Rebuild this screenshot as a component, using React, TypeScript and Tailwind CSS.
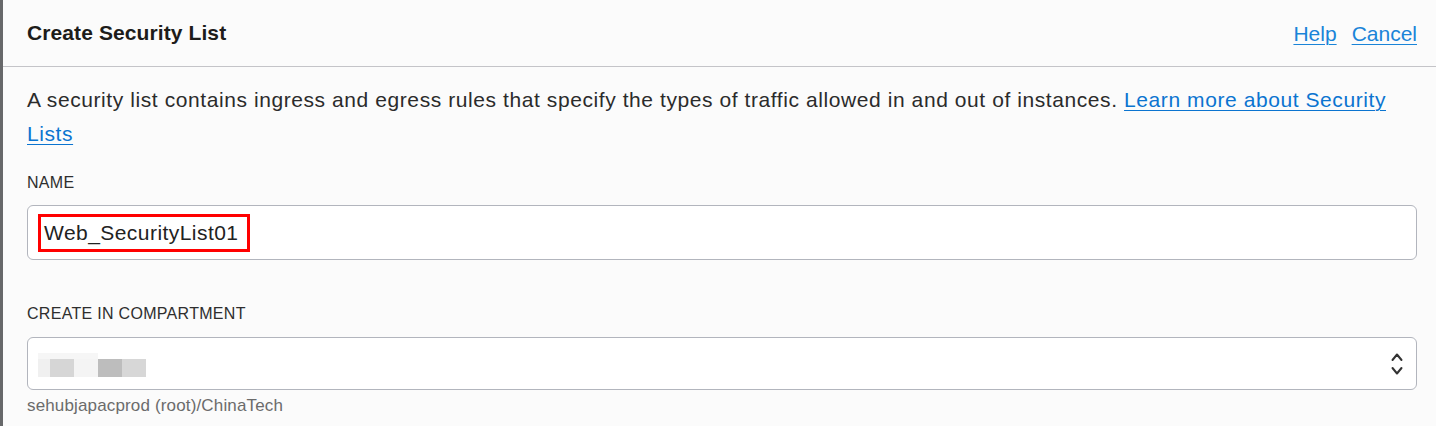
const font = { fontFamily: '"Liberation Sans", Arial, sans-serif' };

function Blurred() {
  return (
    <div className="flex flex-col mt-[3px]">
      <div className="flex h-[6px]">
        <div className="w-[60px] bg-[#f6f6f6]" />
      </div>
      <div className="flex h-[18px]">
        <div className="w-[12px] bg-[#f0f0f0]" />
        <div className="w-[24px] bg-[#d6d6d6]" />
        <div className="w-[24px] bg-[#f4f4f4]" />
        <div className="w-[24px] bg-[#bdbdbd]" />
        <div className="w-[24px] bg-[#d7d7d7]" />
      </div>
    </div>
  );
}

function UpDown() {
  return (
    <svg width="12" height="24" viewBox="0 0 12 24" fill="none" stroke="#333" strokeWidth="2" strokeLinecap="round" strokeLinejoin="round">
      <path d="M1.5 8 L6 2.5 L10.5 8" />
      <path d="M1.5 16 L6 21.5 L10.5 16" />
    </svg>
  );
}

export default function App() {
  return (
    <div
      className="flex w-[1436px] h-[426px] overflow-hidden bg-[#fbfbfb] text-[#161513]"
      style={font}
    >
      <div className="w-[3px] shrink-0 bg-[#67686a]" />
      <div className="flex-1 flex flex-col min-w-0">
        <div className="h-[67px] shrink-0 flex items-center justify-between pl-[24px] pr-[19px] border-b border-[#c4c4c8]">
          <h1 className="text-[21px] font-bold tracking-[0.1px] text-[#1d1c1a]">
            Create Security List
          </h1>
          <div className="flex items-center gap-[15px] text-[21px] text-[#1a84d8] mt-[2px]">
            <a className="underline underline-offset-[3px] decoration-1">Help</a>
            <a className="underline underline-offset-[3px] decoration-1">Cancel</a>
          </div>
        </div>

        <div className="flex flex-col pl-[24px] pr-[19px]">
          <p className="text-[21px] leading-[34px] mt-[16px] text-[#2b2b2b] tracking-[0.58px] pr-[10px]">
            A security list contains ingress and egress rules that specify the
            types of traffic allowed in and out of instances.{" "}
            <a className="text-[#0b74d0] underline underline-offset-[3px] decoration-1">
              Learn more about Security Lists
            </a>
          </p>

          <label className="mt-[24px] text-[16px] leading-[16px] text-[#2e2e2e] tracking-[0.3px]">
            NAME
          </label>
          <div className="mt-[14px] h-[55px] bg-white border border-[#b2b5bd] rounded-[6px] flex items-center pl-[10px]">
            <div className="border-[3px] border-[#ff0000] h-[38px] w-[212px] flex items-center pl-[3px] mt-[1px]">
              <span className="text-[21px] tracking-[0.45px] text-[#222]">
                Web_SecurityList01
              </span>
            </div>
          </div>

          <label className="mt-[46px] text-[16px] leading-[16px] text-[#2e2e2e] tracking-[0.3px]">
            CREATE IN COMPARTMENT
          </label>
          <div className="mt-[15px] h-[53px] bg-white border border-[#b2b5bd] rounded-[6px] flex items-center justify-between pl-[10px] pr-[13px]">
            <Blurred />
            <UpDown />
          </div>
          <p className="mt-[6px] text-[17px] leading-[20px] tracking-[0.15px] text-[#6b6b6b]">
            sehubjapacprod (root)/ChinaTech
          </p>
        </div>
      </div>
    </div>
  );
}
